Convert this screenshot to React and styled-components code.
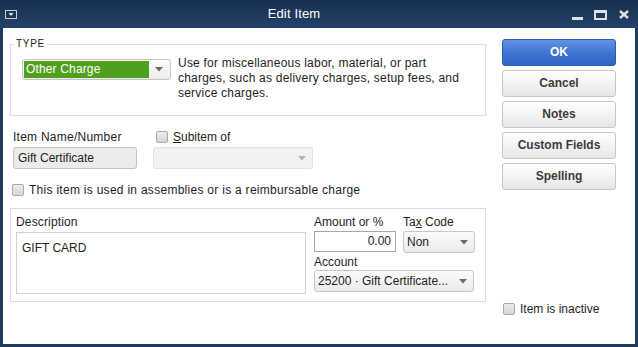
import React from 'react';
import styled, { createGlobalStyle } from 'styled-components';

const Global = createGlobalStyle`
  html, body { margin: 0; padding: 0; background: #1e3a5c; }
  body { font-family: "Liberation Sans", Arial, sans-serif; font-size: 12px; color: #1e1e1e; }
  * { box-sizing: border-box; }
`;

const Window = styled.div`
  width: 638px;
  height: 347px;
  display: flex;
  flex-direction: column;
  background: #1e3a5c;
`;

const TitleBar = styled.div`
  height: 28px;
  flex: none;
  display: flex;
  align-items: center;
  background: linear-gradient(#182f4e, #1f3b5f 60%, #234268);
`;

const TitleLeft = styled.div`
  width: 20px;
  padding-left: 5px;
  display: flex;
  align-items: center;
`;

const Title = styled.div`
  flex: 1;
  text-align: center;
  color: #ffffff;
  font-size: 13px;
  line-height: 28px;
  letter-spacing: 0.15px;
`;

const TitleControls = styled.div`
  width: 70px;
  height: 28px;
  display: flex;
  align-items: flex-start;
  padding-left: 4px;
`;

const CtrlIcon = styled.svg`
  display: block;
  margin-left: ${p => p.$ml || 0}px;
  margin-top: ${p => p.$mt || 0}px;
`;

const Frame = styled.div`
  flex: 1;
  padding: 0 3px 3px 3px;
  display: flex;
`;

const Body = styled.div`
  flex: 1;
  background: #ffffff;
  display: flex;
`;

const LeftCol = styled.div`
  width: 476px;
  margin-left: 7px;
  display: flex;
  flex-direction: column;
`;

const RightCol = styled.div`
  width: 114px;
  margin-left: 16px;
  padding-top: 11px;
  display: flex;
  flex-direction: column;
  gap: 4px;
`;

const GroupBox = styled.div`
  position: relative;
  margin-top: ${p => p.$mt}px;
  height: ${p => p.$h}px;
  border: 1px solid #dcdcdc;
  display: flex;
  padding: ${p => p.$pad};
`;

const GroupLabel = styled.span`
  position: absolute;
  left: 3px;
  top: -7px;
  padding: 0 2px;
  background: #ffffff;
  font-size: 10px;
  line-height: 12px;
  letter-spacing: 0.7px;
  color: #222;
`;

const TypeSelect = styled.div`
  width: 149px;
  height: 21px;
  margin-top: 3px;
  border: 1px solid #c4c4c4;
  border-radius: 3px;
  display: flex;
  padding: 1px;
  background: linear-gradient(#fdfdfd, #ececec);
`;

const TypeValue = styled.div`
  width: 125px;
  background: #4fa01c;
  color: #ffffff;
  font-size: 12px;
  line-height: 17px;
  padding-left: 2px;
  letter-spacing: 0.15px;
`;

const ArrowBox = styled.div`
  flex: 1;
  display: flex;
  align-items: center;
  justify-content: center;
`;

const TypeText = styled.div`
  margin-left: 7px;
  font-size: 12px;
  line-height: 15px;
  letter-spacing: 0.22px;
  color: #1e1e1e;
`;

const NameRow = styled.div`
  margin-top: 14px;
  display: flex;
`;

const Field = styled.div`
  width: ${p => p.$w}px;
  margin-left: ${p => p.$ml}px;
  display: flex;
  flex-direction: column;
`;

const Label = styled.div`
  height: 14px;
  line-height: 14px;
  font-size: 12px;
  color: #1e1e1e;
  display: flex;
  align-items: center;
  gap: 5px;
  white-space: nowrap;
  letter-spacing: ${p => p.$ls || 0}px;
  padding-left: ${p => p.$pl || 0}px;
  margin-bottom: ${p => p.$mb || 0}px;
  margin-top: ${p => p.$mt || 0}px;
`;

const Checkbox = styled.span`
  width: 12px;
  height: 12px;
  flex: none;
  border: 1px solid #a9a9a9;
  border-radius: 2px;
  background: linear-gradient(#ececec, #d6d6d6);
`;

const TextBox = styled.div`
  width: ${p => p.$w}px;
  height: ${p => p.$h}px;
  border: 1px solid ${p => (p.$filled ? '#c2c2c2' : '#a8a8a8')};
  border-radius: ${p => (p.$filled ? 3 : 0)}px;
  background: ${p => (p.$filled ? '#ebebeb' : '#ffffff')};
  font-size: 12px;
  line-height: ${p => p.$h - 2}px;
  padding: 0 4px;
  text-align: ${p => p.$align || 'left'};
  color: #1e1e1e;
`;

const Select = styled.div`
  width: ${p => p.$w}px;
  height: ${p => p.$h}px;
  border: 1px solid ${p => (p.$disabled ? '#e2e2e2' : '#c6c6c6')};
  border-radius: 3px;
  background: ${p => (p.$disabled ? '#f2f2f2' : 'linear-gradient(#fbfbfb, #ebebeb)')};
  display: flex;
  align-items: center;
  padding-left: 3px;
  font-size: 12px;
  color: #1e1e1e;
  margin-left: ${p => p.$ml || 0}px;
`;

const SelectValue = styled.span`
  flex: 1;
  white-space: nowrap;
`;

const SelectArrow = styled.span`
  width: 20px;
  display: flex;
  justify-content: center;
`;

const CheckRow = styled.div`
  margin-top: 15px;
  margin-left: 2px;
  height: 12px;
  display: flex;
  align-items: center;
  gap: 5px;
  font-size: 12px;
  letter-spacing: 0.28px;
  color: #1e1e1e;
`;

const LowerLeft = styled.div`
  display: flex;
  flex-direction: column;
`;

const DescArea = styled.div`
  width: 290px;
  height: 62px;
  border: 1px solid #d2d2d2;
  padding: 8px 5px;
  font-size: 12px;
  line-height: 14px;
  color: #1e1e1e;
`;

const LowerRight = styled.div`
  margin-left: 8px;
  display: flex;
  flex-direction: column;
`;

const FieldPair = styled.div`
  display: flex;
  gap: 7px;
`;

const Button = styled.div`
  height: 27px;
  border-radius: 3px;
  border: 1px solid ${p => (p.$primary ? '#2b5cad' : '#c6c6c6')};
  background: ${p => (p.$primary ? 'linear-gradient(#6294e4, #3d72d2 55%, #3266c6)' : 'linear-gradient(#ffffff, #f3f3f3 50%, #e6e6e6)')};
  color: ${p => (p.$primary ? '#ffffff' : '#3c3c3c')};
  font-weight: bold;
  font-size: 12px;
  line-height: 25px;
  text-align: center;
`;

const Inactive = styled.div`
  margin-top: 108px;
  margin-left: 1px;
  display: flex;
  align-items: center;
  gap: 5px;
  font-size: 12px;
  color: #1e1e1e;
`;

const U = styled.span`
  text-decoration: underline;
`;

const Arrow = ({ light }) => (
  <svg width="8" height="5" viewBox="0 0 8 5">
    <path d="M0 0 H8 L4 4.5 Z" fill={light ? '#b4b4b4' : '#6a6a6a'} />
  </svg>
);

export default function App() {
  return (
    <Window>
      <Global />
      <TitleBar>
        <TitleLeft>
          <svg width="12" height="9" viewBox="0 0 12 9">
            <rect x="0.5" y="0.5" width="11" height="8" fill="#1b3453" stroke="#c9d0d9" />
            <path d="M3.5 3 H8.5 L6 6 Z" fill="#dfe4ea" />
          </svg>
        </TitleLeft>
        <Title>Edit Item</Title>
        <TitleControls>
          <CtrlIcon width="11" height="3" $mt={17}>
            <rect width="11" height="3" fill="#dde2e8" />
          </CtrlIcon>
          <CtrlIcon width="13" height="10" $ml={11} $mt={10}>
            <rect x="1" y="1.5" width="11" height="7.5" fill="none" stroke="#dde2e8" strokeWidth="2" />
            <rect x="0" y="0" width="13" height="3" fill="#dde2e8" />
          </CtrlIcon>
          <CtrlIcon width="10" height="9" $ml={12} $mt={10}>
            <path d="M1 1 L9 8 M9 1 L1 8" stroke="#dde2e8" strokeWidth="2.4" />
          </CtrlIcon>
        </TitleControls>
      </TitleBar>
      <Frame>
        <Body>
          <LeftCol>
            <GroupBox $mt={16} $h={72} $pad="11px 0 0 11px">
              <GroupLabel>TYPE</GroupLabel>
              <TypeSelect>
                <TypeValue>Other Charge</TypeValue>
                <ArrowBox>
                  <Arrow />
                </ArrowBox>
              </TypeSelect>
              <TypeText>
                Use for miscellaneous labor, material, or part
                <br />
                charges, such as delivery charges, setup fees, and
                <br />
                service charges.
              </TypeText>
            </GroupBox>

            <NameRow>
              <Field $w={124} $ml={3}>
                <Label $mb={3} $ls={0.25}>Item Name/Number</Label>
                <TextBox $w={124} $h={22} $filled>Gift Certificate</TextBox>
              </Field>
              <Field $w={160} $ml={16}>
                <Label $pl={3} $mb={3}>
                  <Checkbox />
                  <span>
                    <U>S</U>ubitem of
                  </span>
                </Label>
                <Select $w={160} $h={22} $disabled>
                  <SelectValue />
                  <SelectArrow>
                    <Arrow light />
                  </SelectArrow>
                </Select>
              </Field>
            </NameRow>

            <CheckRow>
              <Checkbox />
              <span>This item is used in assemblies or is a reimbursable charge</span>
            </CheckRow>

            <GroupBox $mt={12} $h={94} $pad="6px 0 0 5px">
              <LowerLeft>
                <Label $mb={3} $ls={0.15}>Description</Label>
                <DescArea>GIFT CARD</DescArea>
              </LowerLeft>
              <LowerRight>
                <FieldPair>
                  <Field $w={82} $ml={0}>
                    <Label $mb={2}>Amount or %</Label>
                    <TextBox $w={82} $h={21} $align="right">0.00</TextBox>
                  </Field>
                  <Field $w={72} $ml={0}>
                    <Label $mb={2}>
                      <span>
                        Ta<U>x</U> Code
                      </span>
                    </Label>
                    <Select $w={72} $h={22}>
                      <SelectValue>Non</SelectValue>
                      <SelectArrow>
                        <Arrow />
                      </SelectArrow>
                    </Select>
                  </Field>
                </FieldPair>
                <Label $mt={2} $mb={1}>Account</Label>
                <Select $w={160} $h={22}>
                  <SelectValue>25200 · Gift Certificate...</SelectValue>
                  <SelectArrow>
                    <Arrow />
                  </SelectArrow>
                </Select>
              </LowerRight>
            </GroupBox>
          </LeftCol>

          <RightCol>
            <Button $primary>OK</Button>
            <Button>Cancel</Button>
            <Button>
              No<U>t</U>es
            </Button>
            <Button>Custom Fields</Button>
            <Button>
              Spellin<U>g</U>
            </Button>
            <Inactive>
              <Checkbox />
              <span>Item is inactive</span>
            </Inactive>
          </RightCol>
        </Body>
      </Frame>
    </Window>
  );
}
